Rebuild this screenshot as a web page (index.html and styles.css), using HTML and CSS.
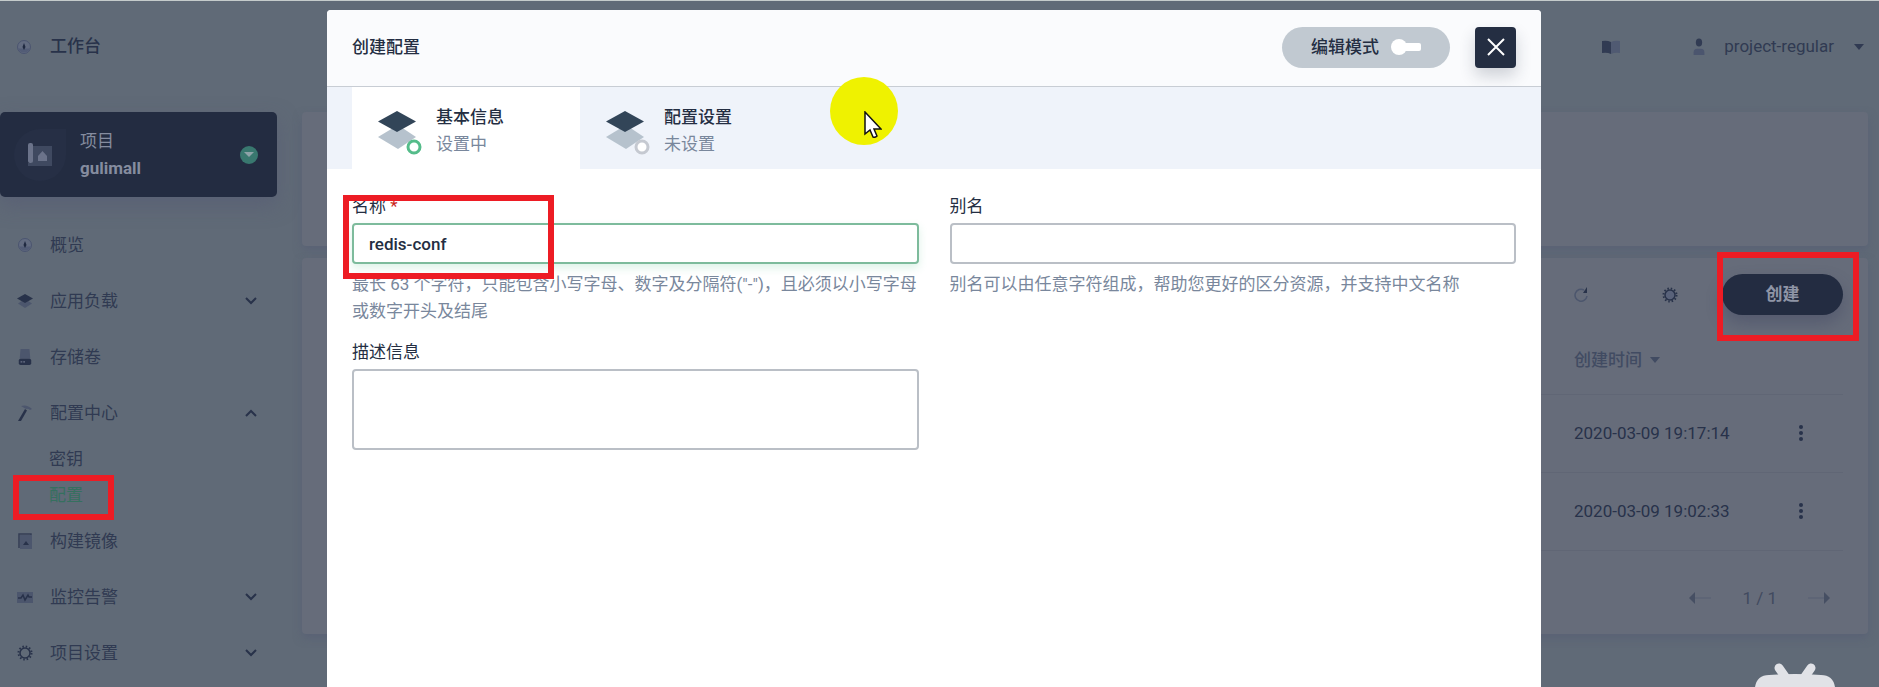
FILE: index.html
```html
<!DOCTYPE html>
<html lang="zh-CN">
<head>
  <meta charset="UTF-8" />
  <meta name="viewport" content="width=device-width, initial-scale=1.0"/>
  <title>创建配置</title>
  <link rel="stylesheet" href="styles.css">
</head>
<body>

<header class="topbar">
  <a class="workbench" href="#">
    <svg class="icon" viewBox="0 0 16 16"><circle cx="8" cy="8" r="6.500" fill="#626b80" stroke="#4b5570"/><path d="M2 9.500a6.500 6.500 0 0 0 12 0z" fill="#525c76"/><path d="M8 4l1.500 4L8 11 6.500 8z" fill="#1f2940"/></svg>
    工作台
  </a>
  <div class="top-tools">
    <a href="#" aria-label="文档">
      <svg width="18" height="14" viewBox="0 0 18 14"><path d="M0 1q5-1 9 1v12q-4-2-9-1z" fill="#313b53"/><path d="M9 2q4-2 9-1v12q-5-1-9 1z" fill="#505a72"/></svg>
    </a>
    <button class="user">
      <svg width="14" height="18" viewBox="0 0 14 20"><ellipse cx="7" cy="5" rx="3.500" ry="4.500" fill="#313b53"/><path d="M1 19v-3q0-4 4-4h4q4 0 4 4v3z" fill="#4b556e"/></svg>
      <span>project-regular</span>
      <i class="caret"></i>
    </button>
  </div>
</header>

<div class="layout">
  <aside class="sidebar">
    <button class="project">
      <span class="project-icon">
        <svg width="24" height="24" viewBox="0 0 24 24"><path d="M4 3h20v20H0V20h4z" fill="#3f4960"/><rect width="5" height="20" rx="2" fill="#6b738a"/><path d="M10 13l4.500-5 4.500 5v5h-9z" fill="#6b738a"/></svg>
      </span>
      <span class="project-text">项目<b>gulimall</b></span>
      <span class="project-arrow"><i></i></span>
    </button>

    <nav>
      <ul class="menu">
        <li><a href="#">
          <svg class="icon" viewBox="0 0 16 16"><circle cx="8" cy="8" r="6.500" fill="#626b80" stroke="#4b5570"/><path d="M2 9.500a6.500 6.500 0 0 0 12 0z" fill="#525c76"/><path d="M8 4l1.500 4L8 11 6.500 8z" fill="#1f2940"/></svg>
          概览</a></li>
        <li><a href="#">
          <svg class="icon" viewBox="0 0 16 16"><path d="M1 10.500l7-4.500 7 4.500-7 4.500z" fill="#4c566d"/><path d="M0 5.500L8 1l8 4.500L8 10z" fill="#28324a"/></svg>
          应用负载
          <svg class="chevron" viewBox="0 0 12 8"><path d="M1 1l5 5 5-5"/></svg></a></li>
        <li><a href="#">
          <svg class="icon" viewBox="0 0 16 18"><path d="M3 0h10l1 11H2z" fill="#4c566d"/><rect x="1" y="11" width="14" height="7" rx="2" fill="#28324a"/><path d="M3 14.500h2m1 0h2" stroke="#6c7489" stroke-width="1.500"/></svg>
          存储卷</a></li>
        <li><a href="#">
          <svg class="icon" viewBox="0 0 16 16"><path d="M4 1q6-2 11 3l-2 1q-2-2-4-1z" fill="#4c566d"/><path d="M8 4l2 1.500L4 16H1z" fill="#28324a"/></svg>
          配置中心
          <svg class="chevron" viewBox="0 0 12 8"><path d="M1 7l5-5 5 5"/></svg></a>
          <ul class="submenu">
            <li><a href="#">密钥</a></li>
            <li class="marked"><a class="active" href="#">配置</a><span class="mark mark-menu"></span></li>
          </ul>
        </li>
        <li><a href="#">
          <svg class="icon" viewBox="0 0 16 16"><path d="M3 2h12v14H3z" fill="#4c566d"/><path d="M2 15V1h12v1" fill="none" stroke="#343e56" stroke-width="1.500"/><path d="M6 12l3-4 3 4z" fill="#28324a"/></svg>
          构建镜像</a></li>
        <li><a href="#">
          <svg class="icon" viewBox="0 0 16 16"><path d="M0 3h16v11H0z" fill="#4c566d"/><path d="M1 9h3l2-3 2 5 3-5 1 2h3" fill="none" stroke="#28324a" stroke-width="1.500"/></svg>
          监控告警
          <svg class="chevron" viewBox="0 0 12 8"><path d="M1 1l5 5 5-5"/></svg></a></li>
        <li><a href="#">
          <svg class="icon" viewBox="0 0 16 16"><circle cx="8" cy="8" r="6.500" fill="none" stroke="#28324a" stroke-width="2" stroke-dasharray="1.500 1.900"/><circle cx="8" cy="8" r="5" fill="none" stroke="#28324a" stroke-width="1.500"/></svg>
          项目设置
          <svg class="chevron" viewBox="0 0 12 8"><path d="M1 1l5 5 5-5"/></svg></a></li>
      </ul>
    </nav>
  </aside>

  <main class="content">
    <section class="panel banner"></section>
    <section class="panel list">
      <div class="toolbar">
        <button class="plain" aria-label="刷新">
          <svg width="16" height="16" viewBox="0 0 16 16"><path d="M10 3a6 6 0 1 0 3 6" fill="none" stroke="#4c566d" stroke-width="1.500"/><path d="M13 0v6H9z" fill="#28324a"/></svg>
        </button>
        <button class="plain" aria-label="设置">
          <svg width="16" height="16" viewBox="0 0 16 16"><circle cx="8" cy="8" r="6.500" fill="none" stroke="#28324a" stroke-width="2" stroke-dasharray="1.500 1.900"/><circle cx="8" cy="8" r="5" fill="#59627a" stroke="#28324a" stroke-width="1.500"/></svg>
        </button>
        <div class="marked">
          <button class="create">创建</button>
          <span class="mark mark-create"></span>
        </div>
      </div>
      <table>
        <thead>
          <tr><th></th><th class="time">创建时间 <i class="caret"></i></th><th class="more"></th></tr>
        </thead>
        <tbody>
          <tr>
            <td></td>
            <td class="time">2020-03-09 19:17:14</td>
            <td class="more"><button class="plain" aria-label="更多"><svg width="4" height="16" viewBox="0 0 4 16" fill="#28324a"><circle cx="2" cy="2" r="2"/><circle cx="2" cy="8" r="2"/><circle cx="2" cy="14" r="2"/></svg></button></td>
          </tr>
          <tr>
            <td></td>
            <td class="time">2020-03-09 19:02:33</td>
            <td class="more"><button class="plain" aria-label="更多"><svg width="4" height="16" viewBox="0 0 4 16" fill="#28324a"><circle cx="2" cy="2" r="2"/><circle cx="2" cy="8" r="2"/><circle cx="2" cy="14" r="2"/></svg></button></td>
          </tr>
        </tbody>
      </table>
      <div class="pager">
        <button class="plain" aria-label="上一页"><svg width="22" height="12" viewBox="0 0 22 12"><path d="M5 6h17" stroke="#565f72"/><path d="M0 6l6-6v12z" fill="#464f63"/></svg></button>
        <span>1 / 1</span>
        <button class="plain" aria-label="下一页"><svg width="22" height="12" viewBox="0 0 22 12"><path d="M0 6h17" stroke="#565f72"/><path d="M22 6l-6-6v12z" fill="#464f63"/></svg></button>
      </div>
    </section>
  </main>
</div>

<div class="overlay">
  <div class="modal" role="dialog" aria-labelledby="modalTitle">
    <div class="modal-head">
      <h2 id="modalTitle">创建配置</h2>
      <button class="edit-mode">编辑模式
        <svg width="30" height="16" viewBox="0 0 30 16" fill="#fff"><rect x="8" y="4" width="22" height="8" rx="2"/><circle cx="8" cy="8" r="8"/></svg>
      </button>
      <button class="close" aria-label="关闭">
        <svg width="18" height="18" viewBox="0 0 18 18"><path d="M1 1l16 16M17 1L1 17" stroke="#fff" stroke-width="2"/></svg>
      </button>
    </div>

    <div class="steps">
      <div class="step current">
        <svg width="48" height="48" viewBox="0 0 48 48"><path d="M4 30l20-12 18 12-18 12z" fill="#b6c2cd"/><path d="M4 14.500L23 4l19 10.500L23 25z" fill="#324558"/><circle cx="40" cy="40" r="6" fill="#fff" stroke="#55bc8a" stroke-width="3"/></svg>
        <div><strong>基本信息</strong><span>设置中</span></div>
      </div>
      <div class="step">
        <svg width="48" height="48" viewBox="0 0 48 48"><path d="M4 30l20-12 18 12-18 12z" fill="#b6c2cd"/><path d="M4 14.500L23 4l19 10.500L23 25z" fill="#324558"/><circle cx="40" cy="40" r="6" fill="#fff" stroke="#c5c9d1" stroke-width="3"/></svg>
        <div><strong>配置设置</strong><span>未设置</span></div>
      </div>
      <div class="pointer">
        <svg width="18" height="28" viewBox="0 0 18 28"><path d="M1 1v22l5-4 3 7q2 1 4-1l-3-7h7z" fill="#fff" stroke="#111" stroke-width="1.500"/></svg>
      </div>
    </div>

    <form class="form">
      <div class="field marked">
        <label for="name">名称 <em>*</em></label>
        <input type="text" id="name" class="focused" value="redis-conf" />
        <p>最长 63 个字符，只能包含小写字母、数字及分隔符("-")，且必须以小写字母或数字开头及结尾</p>
        <span class="mark mark-name"></span>
      </div>
      <div class="field">
        <label for="alias">别名</label>
        <input type="text" id="alias" />
        <p>别名可以由任意字符组成，帮助您更好的区分资源，并支持中文名称</p>
      </div>
      <div class="field">
        <label for="desc">描述信息</label>
        <textarea id="desc"></textarea>
      </div>
    </form>
  </div>
</div>

<svg class="mascot" width="80" height="24" viewBox="0 0 80 24"><path d="M24 5l7 10M56 5l-7 10" stroke="#e1e2e7" stroke-width="9" stroke-linecap="round"/><path d="M0 24q2-12 14-12 26-2 52 0 12 0 14 12z" fill="#e1e2e7"/></svg>

</body>
</html>
```

FILE: styles.css
```css
* { box-sizing: border-box; }
body {
  margin: 0; height: 100vh; overflow: hidden;
  background: #606a77; color: #28324a;
  border-top: 1px solid #c5cbcb;
  font-family: Roboto, "Noto Sans CJK SC", sans-serif;
  font-size: 17px; line-height: 27px;
}
button, input, textarea { font: inherit; color: inherit; }
button { border: none; background: none; padding: 0; cursor: pointer; }
a { color: inherit; text-decoration: none; }
ul { list-style: none; margin: 0; padding: 0; }
svg { display: block; flex: none; }
.plain { display: flex; }

/* top bar */
.topbar {
  height: 111px; padding: 0 15px 20px 16px;
  display: flex; justify-content: space-between; align-items: center;
}
.workbench { display: flex; align-items: center; gap: 18px; font-weight: 500; }
.icon { width: 16px; height: 16px; }
.top-tools { display: flex; align-items: center; gap: 72px; }
.user { display: flex; align-items: center; color: #303a52; }
.user span { margin: 0 20px 0 18px; }
.caret {
  display: inline-block;
  border: 5px solid transparent; border-top: 6px solid; border-bottom: 0;
}

.layout { display: flex; }

/* sidebar */
.sidebar { width: 277px; flex: none; }
.project {
  width: 100%; height: 85px; padding: 0 19px 0 14px;
  display: flex; align-items: center;
  background: #232c41; color: #858c9f; border-radius: 5px;
  box-shadow: 0 8px 20px rgba(84, 88, 115, 0.5);
  text-align: left;
}
.project-icon {
  width: 52px; height: 52px; border-radius: 26px 0 26px 26px;
  background: #262f45;
  display: flex; align-items: center; justify-content: center;
}
.project-text { margin-left: 14px; flex: 1; }
.project-text b { display: block; }
.project-arrow {
  width: 18px; height: 18px; border-radius: 50%; background: #39786f;
  display: flex; align-items: center; justify-content: center;
}
.project-arrow i { border: 5px solid transparent; border-top-color: #8ea3a8; border-bottom: 0; }
.menu { padding-top: 20px; color: #303a52; }
.menu a { height: 56px; padding: 0 20px 0 17px; display: flex; align-items: center; gap: 17px; }
.chevron {
  width: 12px; height: 8px; margin-left: auto;
  fill: none; stroke: #28324a; stroke-width: 2;
}
.submenu a { height: 36px; padding-left: 49px; }
.menu a.active { color: #35705f; }

/* content behind the dialog */
.content { flex: 1; padding: 0 11px 0 25px; }
.panel { background: #666c7a; border-radius: 4px; box-shadow: 0 4px 8px rgba(84, 90, 115, 0.5); }
.banner { height: 134px; margin-bottom: 12px; }
.list { padding: 16px 25px 22px; }
.toolbar {
  height: 41px;
  display: flex; justify-content: flex-end; align-items: center;
}
.toolbar .plain { margin-right: 72px; }
.toolbar .plain + .plain { margin-right: 44px; }
.create {
  width: 121px; height: 41px; border-radius: 21px; display: block;
  background: #232c41; color: #8f95a6; font-weight: 700;
  box-shadow: 0 8px 16px rgba(60, 66, 95, 0.4);
}
table { width: 100%; margin-top: 13px; border-collapse: collapse; }
th, td { padding: 0; border-bottom: 1px solid #606675; text-align: left; }
th { height: 66px; color: #414b62; font-weight: 500; }
th .caret { margin: 0 0 3px 4px; }
td { height: 78px; }
.time { width: 225px; }
.more { width: 44px; }
.pager {
  padding: 34px 13px 0 0; color: #414a5f;
  display: flex; justify-content: flex-end; align-items: center; gap: 31px;
}

/* dialog */
.overlay { position: fixed; inset: 0; padding: 10px 338px 0 327px; pointer-events: none; }
.modal {
  height: 100%; background: #fff; color: #242e42;
  border-radius: 4px 4px 0 0; overflow: hidden; pointer-events: auto;
}
.modal-head {
  height: 77px; padding: 0 25px 2px;
  display: flex; align-items: center;
  background: #fafbfd; border-bottom: 1px solid #c8cdd4;
}
.modal-head h2 { margin: 0 auto 0 0; font-size: 17px; font-weight: 500; }
.edit-mode {
  width: 168px; height: 41px; border-radius: 21px; background: #c1c9d1;
  display: flex; align-items: center; justify-content: center; gap: 12px;
  font-weight: 500;
}
.close {
  width: 41px; height: 41px; margin-left: 25px; border-radius: 4px;
  background: #242e42; box-shadow: 0 8px 16px rgba(36, 46, 66, 0.2);
  display: flex; align-items: center; justify-content: center;
}
.steps { height: 82px; padding-left: 25px; background: #eff3fa; display: flex; position: relative; }
.step { width: 228px; padding: 6px 0 0 22px; display: flex; align-items: center; gap: 14px; }
.step.current { background: #fff; }
.step strong { display: block; font-weight: 500; }
.step span { color: #79879c; }
.pointer {
  position: absolute; left: 503px; top: -10px;
  width: 68px; height: 68px; padding: 34px 0 0 34px;
  border-radius: 50%; background: #eff200;
}
.form {
  padding: 24px 25px;
  display: grid; grid-template-columns: 1fr 1fr; gap: 14px 31px;
}
.field label { display: block; }
.field em { color: #ca2621; font-style: normal; }
.field input, .field textarea {
  display: block; width: 100%; margin: 3px 0 7px; padding: 0 15px;
  border: 2px solid #babfc6; border-radius: 4px; background: #fff;
  font-weight: 500; outline: none; resize: none;
}
.field input { height: 41px; }
.field textarea { height: 81px; }
.field input.focused { border-color: #7dbb9c; box-shadow: 0 4px 8px rgba(85, 188, 138, 0.2); }
.field p { margin: 0; color: #79879c; }

/* red frames */
.marked { position: relative; }
.mark { position: absolute; border: 6px solid #ed1c24; pointer-events: none; }
.mark-name { left: -9px; top: 2px; width: 211px; height: 84px; }
.mark-menu { left: 13px; top: -2px; width: 101px; height: 45px; }
.mark-create { left: -5px; top: -22px; width: 142px; height: 89px; }

.mascot { position: fixed; right: 44px; bottom: 0; }
```
